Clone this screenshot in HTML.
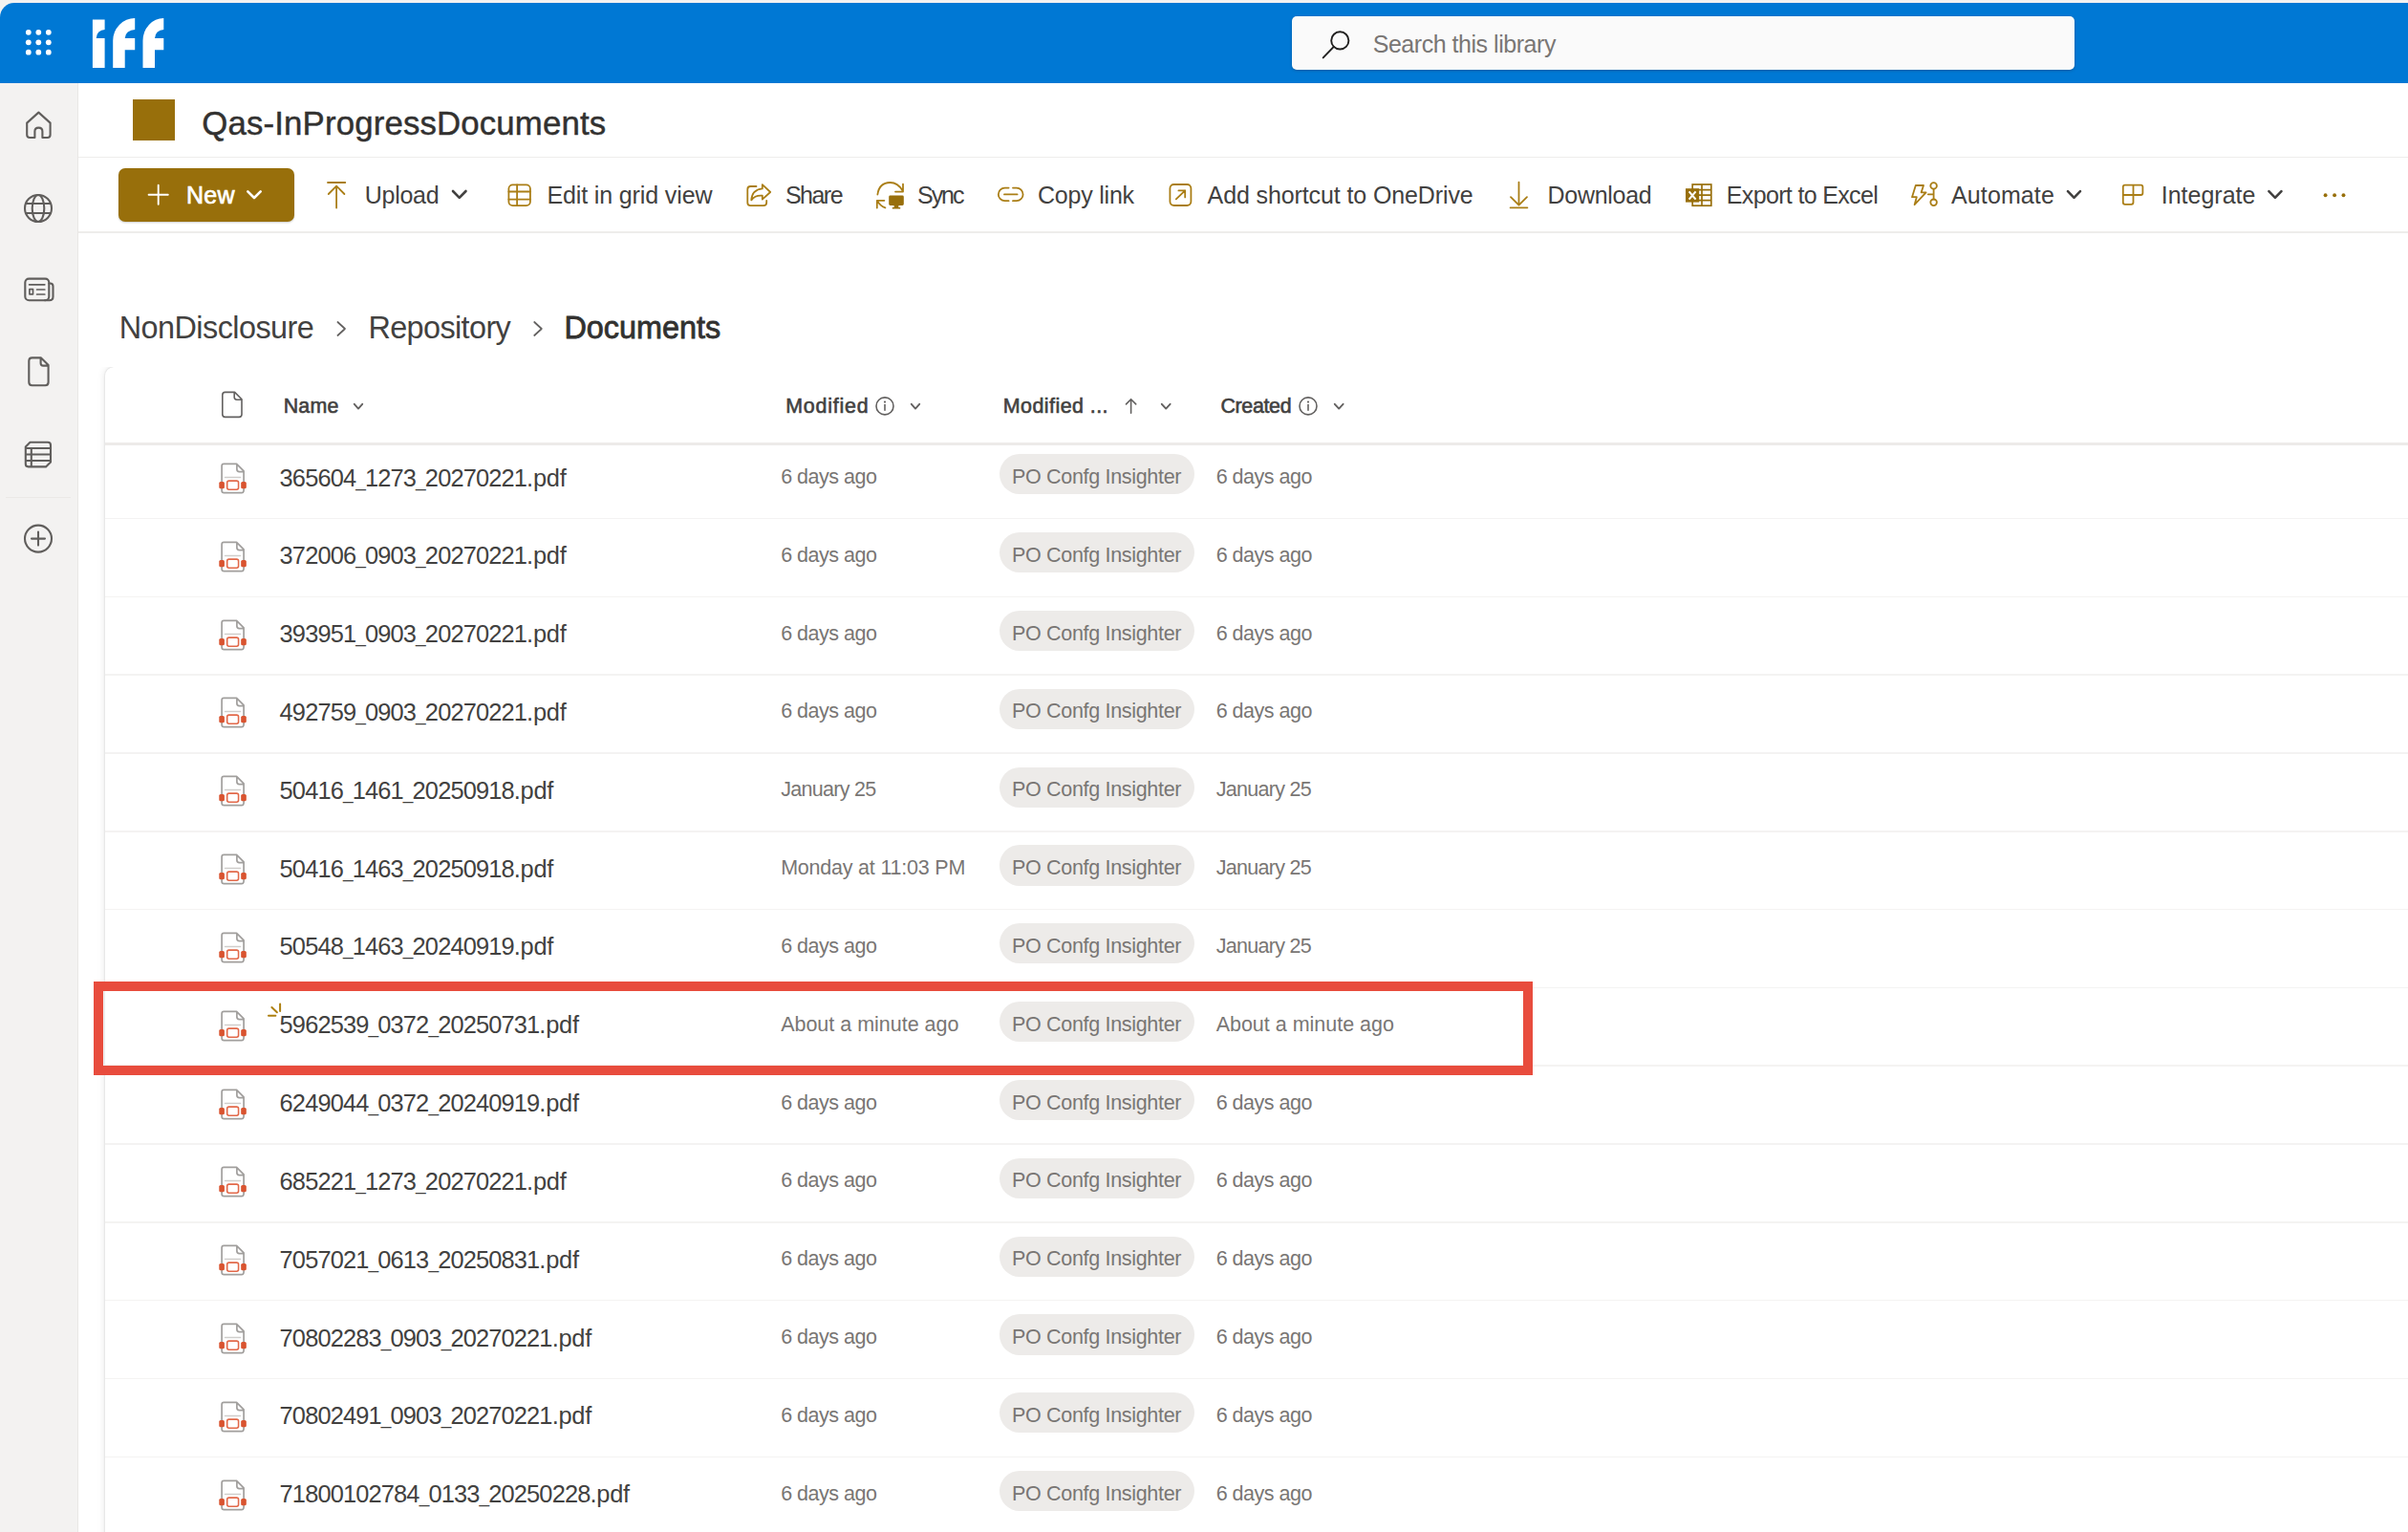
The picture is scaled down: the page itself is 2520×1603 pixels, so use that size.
<!DOCTYPE html>
<html lang="en"><head><meta charset="utf-8"><title>Qas-InProgressDocuments - Documents</title>
<style>
html,body{margin:0;padding:0}
body{width:2520px;height:1603px;overflow:hidden;position:relative;background:#fff;font-family:'Liberation Sans', sans-serif}
.t{position:absolute;white-space:pre;line-height:1;font-family:'Liberation Sans', sans-serif}
.abs{position:absolute}
.u{font-size:.75em}
svg{position:absolute;overflow:visible}

#strip{left:0;top:0;width:2520px;height:30px;background:#f3f2f1}
#suite{left:0;top:3px;width:2520px;height:84px;background:#0078d4;border-top-left-radius:15px}
#search{left:1352px;top:17px;width:819px;height:56px;background:#fafafa;border-radius:5px;box-shadow:0 1px 3px rgba(0,0,0,.25)}
#side{left:0;top:87px;width:81px;height:1516px;background:#f3f2f1;border-right:1px solid #e9e7e5}
#sidesep{left:6px;top:520px;width:68px;height:1px;background:#ebe9e7}
#sitelogo{left:139px;top:104px;width:44px;height:43px;background:#986f0b}
.hl{left:82px;width:2438px;height:1.6px;background:#eeedeb}
#newbtn{left:124px;top:176px;width:184px;height:56px;background:#986f0b;border-radius:7px;box-shadow:0 1px 2px rgba(0,0,0,.2)}
#cardwrap{left:90px;top:384px;width:2430px;height:1219px;overflow:hidden}
#card{left:20px;top:0;width:2430px;height:1300px;background:#fff;border-top-left-radius:9px;box-shadow:0 0 2px rgba(0,0,0,.17),0 0 9px rgba(0,0,0,.11)}
#hline{left:110px;top:462.5px;width:2410px;height:3px;background:#edebe9}
.rl{left:110px;width:2410px;height:1.6px;background:#f4f3f2}
.pill{left:1045.5px;width:204.3px;height:42.2px;border-radius:21.1px;background:#edebe9}
#redbox{left:98px;top:1027.4px;width:1486px;height:77.2px;border:10px solid #e84c3d}

</style></head><body>
<div class="abs" id="strip"></div>
<div class="abs" id="suite"></div>
<div class="abs" id="search"></div>
<div class="abs" id="side"></div>
<div class="abs" id="sidesep"></div>
<div class="abs" id="sitelogo"></div>
<div class="abs hl" style="top:163.9px"></div>
<div class="abs hl" style="top:242.1px"></div>
<div class="abs" id="newbtn"></div>
<div class="abs" id="cardwrap"><div class="abs" id="card"></div></div>
<div class="abs" id="hline"></div>
<div class="abs rl" style="top:541.70px"></div>
<div class="abs rl" style="top:623.52px"></div>
<div class="abs rl" style="top:705.34px"></div>
<div class="abs rl" style="top:787.16px"></div>
<div class="abs rl" style="top:868.98px"></div>
<div class="abs rl" style="top:950.80px"></div>
<div class="abs rl" style="top:1032.62px"></div>
<div class="abs rl" style="top:1114.44px"></div>
<div class="abs rl" style="top:1196.26px"></div>
<div class="abs rl" style="top:1278.08px"></div>
<div class="abs rl" style="top:1359.90px"></div>
<div class="abs rl" style="top:1441.72px"></div>
<div class="abs rl" style="top:1523.54px"></div>
<div class="abs pill" style="top:475.30px"></div>
<div class="abs pill" style="top:557.12px"></div>
<div class="abs pill" style="top:638.94px"></div>
<div class="abs pill" style="top:720.76px"></div>
<div class="abs pill" style="top:802.58px"></div>
<div class="abs pill" style="top:884.40px"></div>
<div class="abs pill" style="top:966.22px"></div>
<div class="abs pill" style="top:1048.04px"></div>
<div class="abs pill" style="top:1129.86px"></div>
<div class="abs pill" style="top:1211.68px"></div>
<div class="abs pill" style="top:1293.50px"></div>
<div class="abs pill" style="top:1375.32px"></div>
<div class="abs pill" style="top:1457.14px"></div>
<div class="abs pill" style="top:1538.96px"></div>
<svg class="ic" style="left:24px;top:28px" width="34" height="34" viewBox="24 28 34 34" ><g fill="#fff"><circle cx="29.8" cy="33.8" r="2.9"/><circle cx="40.3" cy="33.8" r="2.9"/><circle cx="50.8" cy="33.8" r="2.9"/><circle cx="29.8" cy="44.3" r="2.9"/><circle cx="40.3" cy="44.3" r="2.9"/><circle cx="50.8" cy="44.3" r="2.9"/><circle cx="29.8" cy="54.7" r="2.9"/><circle cx="40.3" cy="54.7" r="2.9"/><circle cx="50.8" cy="54.7" r="2.9"/></g></svg>
<svg class="ic" style="left:94px;top:16px" width="82" height="58" viewBox="94 16 82 58" role="img" aria-label="iff"><title>iff</title><g fill="#fff"><path d="M96.9,20.5 L109.6,20.5 L109.6,30.9 A8.9,9.2 0 0 0 100.7,40.1 L109.6,40.1 L109.6,71 L96.9,71 Z"/><path d="M118.2,71 L118.2,42.5 A22.999999999999986,23.5 0 0 1 141.2,19 L141.2,30.9 A10.5,9.2 0 0 0 130.7,40.1 L141.2,40.1 L141.2,52.2 L130.7,52.2 L130.7,71 Z"/><path d="M149.5,71 L149.5,42.5 A21.799999999999997,23.5 0 0 1 171.3,19 L171.3,30.9 A9.300000000000011,9.2 0 0 0 162.0,40.1 L171.3,40.1 L171.3,52.2 L162.0,52.2 L162.0,71 Z"/></g></svg>
<svg class="ic" style="left:1380px;top:28px" width="36" height="38" viewBox="1380 28 36 38" ><g fill="none" stroke="#201f1e" stroke-width="1.9" stroke-linecap="round"><circle cx="1402.3" cy="42.4" r="9.1"/><path d="M1395.8,48.9 L1384.7,60.4"/></g></svg>
<svg class="ic" style="left:24px;top:112px" width="34" height="36" viewBox="24 112 34 36" ><path fill="none" stroke="#605e5c" stroke-width="2.1" stroke-linecap="round" stroke-linejoin="round" d="M40.4,117.6 L28.2,128.6 L28.2,141 Q28.2,144 31.2,144 L36.4,144 L36.4,137.5 Q36.4,133.6 40.4,133.6 Q44.4,133.6 44.4,137.5 L44.4,144 L49.6,144 Q52.6,144 52.6,141 L52.6,128.6 Z"/></svg>
<svg class="ic" style="left:22px;top:200px" width="36" height="36" viewBox="22 200 36 36" ><g fill="none" stroke="#605e5c" stroke-width="2.1" stroke-linecap="round" stroke-linejoin="round"><circle cx="40" cy="218" r="14"/><ellipse cx="40" cy="218" rx="6.3" ry="14"/><path d="M26.9,213 L53.1,213 M26.9,223 L53.1,223"/></g></svg>
<svg class="ic" style="left:22px;top:286px" width="38" height="32" viewBox="22 286 38 32" ><g fill="none" stroke="#605e5c" stroke-width="2.1" stroke-linecap="round" stroke-linejoin="round"><rect x="26.3" y="291.6" width="25" height="22.6" rx="4"/><path d="M51.3,296.5 L52.5,296.5 Q55.5,296.5 55.5,299.5 L55.5,310.5 Q55.5,314.2 51.8,314.2 L47,314.2"/><path d="M30.6,297.8 L46.8,297.8 M38.6,303 L46.8,303 M38.6,308 L46.8,308" stroke-width="1.7"/><rect x="30.9" y="302.6" width="3.6" height="5.2" stroke-width="1.7"/></g></svg>
<svg class="ic" style="left:26px;top:370px" width="30" height="38" viewBox="26 370 30 38" ><path fill="none" stroke="#605e5c" stroke-width="2.1" stroke-linecap="round" stroke-linejoin="round" d="M33.5,374.4 L43,374.4 L50.6,382 L50.6,400 Q50.6,403.2 47.4,403.2 L33.5,403.2 Q30.3,403.2 30.3,400 L30.3,377.6 Q30.3,374.4 33.5,374.4 Z M42.6,374.8 L42.6,380 Q42.6,382.6 45.2,382.6 L50.2,382.6"/></svg>
<svg class="ic" style="left:22px;top:458px" width="36" height="36" viewBox="22 458 36 36" ><path fill="none" stroke="#605e5c" stroke-width="2.1" stroke-linecap="round" stroke-linejoin="round" stroke-width="1.8" d="M31.5,462.8 L50,462.8 Q53,462.8 53,465.8 L53,483.5 L48,488.4 L29.6,488.4 Q26.8,488.4 26.8,485.6 L26.8,467.4 ZM26.8,469 L53,469 M26.8,475.5 L53,475.5 M26.8,482 L53,482 M32.8,469 L32.8,488.4"/></svg>
<svg class="ic" style="left:22px;top:546px" width="36" height="36" viewBox="22 546 36 36" ><g fill="none" stroke="#605e5c" stroke-width="2.1" stroke-linecap="round" stroke-linejoin="round"><circle cx="40" cy="563.6" r="14"/><path d="M33,563.6 L47,563.6 M40,556.6 L40,570.6"/></g></svg>
<svg class="ic" style="left:150px;top:188px" width="32" height="32" viewBox="150 188 32 32" ><path fill="none" stroke="#fff" stroke-width="1.9" stroke-linecap="round" d="M155.6,203.7 L175.8,203.7 M165.7,193.7 L165.7,213.7"/></svg>
<svg class="ic" style="left:254px;top:194px" width="24" height="18" viewBox="254 194 24 18" ><path fill="none" stroke="#fff" stroke-width="2.6" stroke-linecap="round" stroke-linejoin="round" d="M259.3,200.3 L266.0,207.0 L272.7,200.3"/></svg>
<svg class="ic" style="left:468px;top:194px" width="24" height="18" viewBox="468 194 24 18" ><path fill="none" stroke="#424140" stroke-width="2.6" stroke-linecap="round" stroke-linejoin="round" d="M474,200.0 L480.75,206.8 L487.5,200.0"/></svg>
<svg class="ic" style="left:2158px;top:194px" width="24" height="18" viewBox="2158 194 24 18" ><path fill="none" stroke="#424140" stroke-width="2.6" stroke-linecap="round" stroke-linejoin="round" d="M2164,200.2 L2170.5,206.8 L2177,200.2"/></svg>
<svg class="ic" style="left:2369px;top:194px" width="24" height="18" viewBox="2369 194 24 18" ><path fill="none" stroke="#424140" stroke-width="2.6" stroke-linecap="round" stroke-linejoin="round" d="M2374.4,200.2 L2380.95,206.8 L2387.5,200.2"/></svg>
<svg class="ic" style="left:338px;top:186px" width="28" height="36" viewBox="338 186 28 36" ><path fill="none" stroke="#aa7e16" stroke-width="1.8" stroke-linecap="round" stroke-linejoin="round" d="M343,191 L361.3,191 M352.1,194.6 L352.1,217.6 M343.8,203 L352.1,194.6 L360.4,203"/></svg>
<svg class="ic" style="left:528px;top:188px" width="32" height="32" viewBox="528 188 32 32" ><g fill="none" stroke="#aa7e16" stroke-width="1.8" stroke-linecap="round" stroke-linejoin="round"><rect x="532.4" y="193.4" width="22.5" height="21.8" rx="4.2"/><path d="M541.1,193.4 L541.1,215.2 M532.4,200.5 L554.9,200.5 M532.4,208.6 L554.9,208.6"/></g></svg>
<svg class="ic" style="left:778px;top:188px" width="32" height="32" viewBox="778 188 32 32" ><path fill="none" stroke="#aa7e16" stroke-width="1.8" stroke-linecap="round" stroke-linejoin="round" d="M791.5,195 L785.5,195 Q782.3,195 782.3,198.2 L782.3,212 Q782.3,215.2 785.5,215.2 L799,215.2 Q802.2,215.2 802.2,212 L802.2,210 M797.8,193.2 L806.2,201 L797.8,208.6 L797.8,204.6 Q790,204 786.3,209.4 Q787,198.6 797.8,197.4 Z"/></svg>
<svg class="ic" style="left:912px;top:186px" width="38" height="36" viewBox="912 186 38 36" ><g fill="none" stroke="#aa7e16" stroke-width="1.8" stroke-linecap="round" stroke-linejoin="round"><path d="M918.4,203.5 Q920,191.2 931.5,191 Q939.5,191 944.6,199.5 M945,192.6 L945,200.6 L937,200.6"/><path d="M917.8,217.6 L917.8,209.8 L925.4,209.8 M918.2,210.2 Q921,215.6 926.4,217.4"/><path fill="#986f0b" stroke="none" d="M931.6,204.6 L944.4,204.6 Q945.8,204.6 945.8,206 L945.8,213.6 Q945.8,215 944.4,215 L940.4,215 L940.4,217 L942.2,217 L942.2,218.6 L933.8,218.6 L933.8,217 L935.6,217 L935.6,215 L931.6,215 Q930.2,215 930.2,213.6 L930.2,206 Q930.2,204.6 931.6,204.6 Z"/></g></svg>
<svg class="ic" style="left:1040px;top:190px" width="36" height="28" viewBox="1040 190 36 28" ><path fill="none" stroke="#aa7e16" stroke-width="1.8" stroke-linecap="round" stroke-linejoin="round" d="M1055.6,196.6 L1051.6,196.6 A6.8,6.8 0 0 0 1051.6,210.2 L1055.6,210.2 M1060,196.6 L1063.8,196.6 A6.8,6.8 0 0 1 1063.8,210.2 L1060,210.2 M1051,203.4 L1064.6,203.4"/></svg>
<svg class="ic" style="left:1220px;top:188px" width="32" height="32" viewBox="1220 188 32 32" ><g fill="none" stroke="#aa7e16" stroke-width="1.8" stroke-linecap="round" stroke-linejoin="round"><rect x="1224.4" y="193" width="22" height="22" rx="4.2"/><path d="M1230.8,208.4 L1240.2,199.4 M1233.4,199.4 L1240.2,199.4 L1240.2,206.4"/></g></svg>
<svg class="ic" style="left:1576px;top:186px" width="28" height="36" viewBox="1576 186 28 36" ><path fill="none" stroke="#aa7e16" stroke-width="1.8" stroke-linecap="round" stroke-linejoin="round" d="M1589.5,190.6 L1589.5,214.2 M1581,206.2 L1589.5,214.6 L1598,206.2 M1580.6,217.3 L1598.4,217.3"/></svg>
<svg class="ic" style="left:1760px;top:188px" width="36" height="32" viewBox="1760 188 36 32" ><g fill="none" stroke="#986f0b" stroke-width="1.7"><rect x="1771.2" y="193" width="19.6" height="22.2"/><path d="M1781,193 L1781,215.2 M1771.2,198.6 L1790.8,198.6 M1771.2,204.1 L1790.8,204.1 M1771.2,209.6 L1790.8,209.6"/></g><rect x="1764" y="197.2" width="14.2" height="14.4" fill="#986f0b"/><path d="M1767.6,200.4 L1774.6,208.6 M1774.6,200.4 L1767.6,208.6" stroke="#fff" stroke-width="2.1" fill="none"/></svg>
<svg class="ic" style="left:1996px;top:186px" width="36" height="34" viewBox="1996 186 36 34" ><g fill="none" stroke="#aa7e16" stroke-width="1.8" stroke-linecap="round" stroke-linejoin="round"><path d="M2004.8,194 L2013,194 L2010.6,201.4 L2015.6,201.4 L2003.6,214.2 L2005.8,206.2 L2001,206.2 Z"/><circle cx="2023.6" cy="194.4" r="3.3"/><circle cx="2023.6" cy="211.8" r="3.3"/><path d="M2023.6,197.8 L2023.6,208.4 M2017.8,203.3 L2023.6,203.3"/></g></svg>
<svg class="ic" style="left:2216px;top:188px" width="32" height="32" viewBox="2216 188 32 32" ><path fill="none" stroke="#aa7e16" stroke-width="1.8" stroke-linecap="round" stroke-linejoin="round" d="M2223.8,193.6 L2240.4,193.6 Q2242.4,193.6 2242.4,195.6 L2242.4,202 Q2242.4,204 2240.4,204 L2232.5,204 L2232.5,211.8 Q2232.5,213.8 2230.5,213.8 L2223.8,213.8 Q2221.8,213.8 2221.8,211.8 L2221.8,195.6 Q2221.8,193.6 2223.8,193.6 Z M2232.5,193.6 L2232.5,204 M2221.8,204 L2232.5,204"/></svg>
<svg class="ic" style="left:2428px;top:198px" width="32" height="12" viewBox="2428 198 32 12" ><g fill="#986f0b"><circle cx="2433.6" cy="204.3" r="1.95"/><circle cx="2443.1" cy="204.3" r="1.95"/><circle cx="2452.5" cy="204.3" r="1.95"/></g></svg>
<svg class="ic" style="left:348px;top:332px" width="18" height="24" viewBox="348 332 18 24" ><path fill="none" stroke="#636160" stroke-width="1.7" stroke-linecap="round" stroke-linejoin="round" d="M353.4,337 L361,344 L353.4,351"/></svg>
<svg class="ic" style="left:554px;top:332px" width="18" height="24" viewBox="554 332 18 24" ><path fill="none" stroke="#636160" stroke-width="1.7" stroke-linecap="round" stroke-linejoin="round" d="M559.2,337 L566.8,344 L559.2,351"/></svg>
<svg class="ic" style="left:228px;top:406px" width="30" height="34" viewBox="228 406 30 34" ><path fill="none" stroke="#636160" stroke-width="1.6" stroke-linecap="round" stroke-linejoin="round" d="M235.6,410.4 L245.6,410.4 L253,417.8 L253,433.6 Q253,436.4 250.2,436.4 L235.6,436.4 Q232.8,436.4 232.8,433.6 L232.8,413.2 Q232.8,410.4 235.6,410.4 Z M245.2,410.8 L245.2,415.6 Q245.2,418.2 247.8,418.2 L252.6,418.2"/></svg>
<svg class="ic" style="left:366px;top:418px" width="18" height="14" viewBox="366 418 18 14" ><path fill="none" stroke="#636160" stroke-width="1.9" stroke-linecap="round" stroke-linejoin="round" d="M370.8,422.8 L375.0,427.6 L379.2,422.8"/></svg>
<svg class="ic" style="left:949.4px;top:418px" width="18.0" height="14" viewBox="949.4 418 18.0 14" ><path fill="none" stroke="#636160" stroke-width="1.9" stroke-linecap="round" stroke-linejoin="round" d="M954.1999999999999,422.8 L958.4,427.6 L962.6,422.8"/></svg>
<svg class="ic" style="left:1210.6px;top:418px" width="18.40000000000009" height="14" viewBox="1210.6 418 18.40000000000009 14" ><path fill="none" stroke="#636160" stroke-width="1.9" stroke-linecap="round" stroke-linejoin="round" d="M1215.3999999999999,422.8 L1219.8,427.6 L1224.2,422.8"/></svg>
<svg class="ic" style="left:1391.6px;top:418px" width="18.40000000000009" height="14" viewBox="1391.6 418 18.40000000000009 14" ><path fill="none" stroke="#636160" stroke-width="1.9" stroke-linecap="round" stroke-linejoin="round" d="M1396.3999999999999,422.8 L1400.8,427.6 L1405.2,422.8"/></svg>
<svg class="ic" style="left:914.1px;top:412px" width="24" height="26" viewBox="914.1 412 24 26" ><g fill="none" stroke="#636160" stroke-width="1.6" stroke-linecap="round" stroke-linejoin="round" stroke-width="1.4"><circle cx="926.1" cy="424.9" r="9.0"/><path d="M926.1,423.6 L926.1,429.2"/></g><circle cx="926.1" cy="420.6" r="1.1" fill="#636160"/></svg>
<svg class="ic" style="left:1356.9px;top:412px" width="24" height="26" viewBox="1356.9 412 24 26" ><g fill="none" stroke="#636160" stroke-width="1.6" stroke-linecap="round" stroke-linejoin="round" stroke-width="1.4"><circle cx="1368.9" cy="424.9" r="9.0"/><path d="M1368.9,423.6 L1368.9,429.2"/></g><circle cx="1368.9" cy="420.6" r="1.1" fill="#636160"/></svg>
<svg class="ic" style="left:1174px;top:412px" width="20" height="24" viewBox="1174 412 20 24" ><path fill="none" stroke="#636160" stroke-width="1.6" stroke-linecap="round" stroke-linejoin="round" d="M1183.6,417.8 L1183.6,432.2 M1178.5,422.9 L1183.6,417.7 L1188.7,422.9"/></svg>
<svg class="ic" style="left:226px;top:482.0px" width="36" height="36" viewBox="226 482.0 36 36" ><path fill="#fff" stroke="#a19f9d" stroke-width="1.7" stroke-linejoin="round" d="M234.2,485.4 L247.6,485.4 L255.1,492.9 L255.1,513.2 Q255.1,515.6 252.7,515.6 L234.5,515.6 Q232.1,515.6 232.1,513.2 L232.1,487.5 Q232.1,485.4 234.2,485.4 Z M247.9,485.8 L247.9,491.0 Q247.9,493.6 250.5,493.6 L254.8,493.6"/><path d="M235.6,499.5 L251.6,499.5" stroke="#d0cecc" stroke-width="1.6" stroke-linecap="round"/><rect x="237.7" y="503.1" width="11.9" height="9.1" rx="1.9" fill="#fff" stroke="#e2694a" stroke-width="1.6"/><rect x="229.3" y="503.9" width="5.6" height="7.4" rx="1.6" fill="#d9532f"/><rect x="252.2" y="503.9" width="5.6" height="7.4" rx="1.6" fill="#d9532f"/></svg>
<svg class="ic" style="left:226px;top:563.82px" width="36" height="36" viewBox="226 563.82 36 36" ><path fill="#fff" stroke="#a19f9d" stroke-width="1.7" stroke-linejoin="round" d="M234.2,567.22 L247.6,567.22 L255.1,574.72 L255.1,595.02 Q255.1,597.42 252.7,597.42 L234.5,597.42 Q232.1,597.42 232.1,595.02 L232.1,569.32 Q232.1,567.22 234.2,567.22 Z M247.9,567.62 L247.9,572.82 Q247.9,575.42 250.5,575.42 L254.8,575.42"/><path d="M235.6,581.32 L251.6,581.32" stroke="#d0cecc" stroke-width="1.6" stroke-linecap="round"/><rect x="237.7" y="584.92" width="11.9" height="9.1" rx="1.9" fill="#fff" stroke="#e2694a" stroke-width="1.6"/><rect x="229.3" y="585.72" width="5.6" height="7.4" rx="1.6" fill="#d9532f"/><rect x="252.2" y="585.72" width="5.6" height="7.4" rx="1.6" fill="#d9532f"/></svg>
<svg class="ic" style="left:226px;top:645.64px" width="36" height="36" viewBox="226 645.64 36 36" ><path fill="#fff" stroke="#a19f9d" stroke-width="1.7" stroke-linejoin="round" d="M234.2,649.04 L247.6,649.04 L255.1,656.54 L255.1,676.84 Q255.1,679.24 252.7,679.24 L234.5,679.24 Q232.1,679.24 232.1,676.84 L232.1,651.14 Q232.1,649.04 234.2,649.04 Z M247.9,649.44 L247.9,654.64 Q247.9,657.24 250.5,657.24 L254.8,657.24"/><path d="M235.6,663.14 L251.6,663.14" stroke="#d0cecc" stroke-width="1.6" stroke-linecap="round"/><rect x="237.7" y="666.74" width="11.9" height="9.1" rx="1.9" fill="#fff" stroke="#e2694a" stroke-width="1.6"/><rect x="229.3" y="667.54" width="5.6" height="7.4" rx="1.6" fill="#d9532f"/><rect x="252.2" y="667.54" width="5.6" height="7.4" rx="1.6" fill="#d9532f"/></svg>
<svg class="ic" style="left:226px;top:727.46px" width="36" height="36" viewBox="226 727.46 36 36" ><path fill="#fff" stroke="#a19f9d" stroke-width="1.7" stroke-linejoin="round" d="M234.2,730.86 L247.6,730.86 L255.1,738.36 L255.1,758.66 Q255.1,761.06 252.7,761.06 L234.5,761.06 Q232.1,761.06 232.1,758.66 L232.1,732.96 Q232.1,730.86 234.2,730.86 Z M247.9,731.26 L247.9,736.46 Q247.9,739.06 250.5,739.06 L254.8,739.06"/><path d="M235.6,744.96 L251.6,744.96" stroke="#d0cecc" stroke-width="1.6" stroke-linecap="round"/><rect x="237.7" y="748.56" width="11.9" height="9.1" rx="1.9" fill="#fff" stroke="#e2694a" stroke-width="1.6"/><rect x="229.3" y="749.36" width="5.6" height="7.4" rx="1.6" fill="#d9532f"/><rect x="252.2" y="749.36" width="5.6" height="7.4" rx="1.6" fill="#d9532f"/></svg>
<svg class="ic" style="left:226px;top:809.28px" width="36" height="36" viewBox="226 809.28 36 36" ><path fill="#fff" stroke="#a19f9d" stroke-width="1.7" stroke-linejoin="round" d="M234.2,812.68 L247.6,812.68 L255.1,820.18 L255.1,840.48 Q255.1,842.88 252.7,842.88 L234.5,842.88 Q232.1,842.88 232.1,840.48 L232.1,814.78 Q232.1,812.68 234.2,812.68 Z M247.9,813.08 L247.9,818.28 Q247.9,820.88 250.5,820.88 L254.8,820.88"/><path d="M235.6,826.78 L251.6,826.78" stroke="#d0cecc" stroke-width="1.6" stroke-linecap="round"/><rect x="237.7" y="830.38" width="11.9" height="9.1" rx="1.9" fill="#fff" stroke="#e2694a" stroke-width="1.6"/><rect x="229.3" y="831.18" width="5.6" height="7.4" rx="1.6" fill="#d9532f"/><rect x="252.2" y="831.18" width="5.6" height="7.4" rx="1.6" fill="#d9532f"/></svg>
<svg class="ic" style="left:226px;top:891.1px" width="36" height="36" viewBox="226 891.1 36 36" ><path fill="#fff" stroke="#a19f9d" stroke-width="1.7" stroke-linejoin="round" d="M234.2,894.5 L247.6,894.5 L255.1,902.0 L255.1,922.3 Q255.1,924.7 252.7,924.7 L234.5,924.7 Q232.1,924.7 232.1,922.3 L232.1,896.6 Q232.1,894.5 234.2,894.5 Z M247.9,894.9 L247.9,900.1 Q247.9,902.7 250.5,902.7 L254.8,902.7"/><path d="M235.6,908.6 L251.6,908.6" stroke="#d0cecc" stroke-width="1.6" stroke-linecap="round"/><rect x="237.7" y="912.2" width="11.9" height="9.1" rx="1.9" fill="#fff" stroke="#e2694a" stroke-width="1.6"/><rect x="229.3" y="913.0" width="5.6" height="7.4" rx="1.6" fill="#d9532f"/><rect x="252.2" y="913.0" width="5.6" height="7.4" rx="1.6" fill="#d9532f"/></svg>
<svg class="ic" style="left:226px;top:972.92px" width="36" height="36" viewBox="226 972.92 36 36" ><path fill="#fff" stroke="#a19f9d" stroke-width="1.7" stroke-linejoin="round" d="M234.2,976.32 L247.6,976.32 L255.1,983.82 L255.1,1004.12 Q255.1,1006.52 252.7,1006.52 L234.5,1006.52 Q232.1,1006.52 232.1,1004.12 L232.1,978.42 Q232.1,976.32 234.2,976.32 Z M247.9,976.72 L247.9,981.92 Q247.9,984.52 250.5,984.52 L254.8,984.52"/><path d="M235.6,990.42 L251.6,990.42" stroke="#d0cecc" stroke-width="1.6" stroke-linecap="round"/><rect x="237.7" y="994.02" width="11.9" height="9.1" rx="1.9" fill="#fff" stroke="#e2694a" stroke-width="1.6"/><rect x="229.3" y="994.82" width="5.6" height="7.4" rx="1.6" fill="#d9532f"/><rect x="252.2" y="994.82" width="5.6" height="7.4" rx="1.6" fill="#d9532f"/></svg>
<svg class="ic" style="left:226px;top:1054.74px" width="36" height="36" viewBox="226 1054.74 36 36" ><path fill="#fff" stroke="#a19f9d" stroke-width="1.7" stroke-linejoin="round" d="M234.2,1058.14 L247.6,1058.14 L255.1,1065.64 L255.1,1085.94 Q255.1,1088.34 252.7,1088.34 L234.5,1088.34 Q232.1,1088.34 232.1,1085.94 L232.1,1060.24 Q232.1,1058.14 234.2,1058.14 Z M247.9,1058.54 L247.9,1063.74 Q247.9,1066.34 250.5,1066.34 L254.8,1066.34"/><path d="M235.6,1072.24 L251.6,1072.24" stroke="#d0cecc" stroke-width="1.6" stroke-linecap="round"/><rect x="237.7" y="1075.84" width="11.9" height="9.1" rx="1.9" fill="#fff" stroke="#e2694a" stroke-width="1.6"/><rect x="229.3" y="1076.64" width="5.6" height="7.4" rx="1.6" fill="#d9532f"/><rect x="252.2" y="1076.64" width="5.6" height="7.4" rx="1.6" fill="#d9532f"/></svg>
<svg class="ic" style="left:226px;top:1136.56px" width="36" height="36" viewBox="226 1136.56 36 36" ><path fill="#fff" stroke="#a19f9d" stroke-width="1.7" stroke-linejoin="round" d="M234.2,1139.96 L247.6,1139.96 L255.1,1147.46 L255.1,1167.76 Q255.1,1170.16 252.7,1170.16 L234.5,1170.16 Q232.1,1170.16 232.1,1167.76 L232.1,1142.06 Q232.1,1139.96 234.2,1139.96 Z M247.9,1140.36 L247.9,1145.56 Q247.9,1148.16 250.5,1148.16 L254.8,1148.16"/><path d="M235.6,1154.06 L251.6,1154.06" stroke="#d0cecc" stroke-width="1.6" stroke-linecap="round"/><rect x="237.7" y="1157.66" width="11.9" height="9.1" rx="1.9" fill="#fff" stroke="#e2694a" stroke-width="1.6"/><rect x="229.3" y="1158.46" width="5.6" height="7.4" rx="1.6" fill="#d9532f"/><rect x="252.2" y="1158.46" width="5.6" height="7.4" rx="1.6" fill="#d9532f"/></svg>
<svg class="ic" style="left:226px;top:1218.38px" width="36" height="36" viewBox="226 1218.38 36 36" ><path fill="#fff" stroke="#a19f9d" stroke-width="1.7" stroke-linejoin="round" d="M234.2,1221.78 L247.6,1221.78 L255.1,1229.28 L255.1,1249.58 Q255.1,1251.98 252.7,1251.98 L234.5,1251.98 Q232.1,1251.98 232.1,1249.58 L232.1,1223.88 Q232.1,1221.78 234.2,1221.78 Z M247.9,1222.18 L247.9,1227.38 Q247.9,1229.98 250.5,1229.98 L254.8,1229.98"/><path d="M235.6,1235.88 L251.6,1235.88" stroke="#d0cecc" stroke-width="1.6" stroke-linecap="round"/><rect x="237.7" y="1239.48" width="11.9" height="9.1" rx="1.9" fill="#fff" stroke="#e2694a" stroke-width="1.6"/><rect x="229.3" y="1240.28" width="5.6" height="7.4" rx="1.6" fill="#d9532f"/><rect x="252.2" y="1240.28" width="5.6" height="7.4" rx="1.6" fill="#d9532f"/></svg>
<svg class="ic" style="left:226px;top:1300.2px" width="36" height="36" viewBox="226 1300.2 36 36" ><path fill="#fff" stroke="#a19f9d" stroke-width="1.7" stroke-linejoin="round" d="M234.2,1303.6 L247.6,1303.6 L255.1,1311.1 L255.1,1331.4 Q255.1,1333.8 252.7,1333.8 L234.5,1333.8 Q232.1,1333.8 232.1,1331.4 L232.1,1305.7 Q232.1,1303.6 234.2,1303.6 Z M247.9,1304.0 L247.9,1309.2 Q247.9,1311.8 250.5,1311.8 L254.8,1311.8"/><path d="M235.6,1317.7 L251.6,1317.7" stroke="#d0cecc" stroke-width="1.6" stroke-linecap="round"/><rect x="237.7" y="1321.3" width="11.9" height="9.1" rx="1.9" fill="#fff" stroke="#e2694a" stroke-width="1.6"/><rect x="229.3" y="1322.1" width="5.6" height="7.4" rx="1.6" fill="#d9532f"/><rect x="252.2" y="1322.1" width="5.6" height="7.4" rx="1.6" fill="#d9532f"/></svg>
<svg class="ic" style="left:226px;top:1382.02px" width="36" height="36" viewBox="226 1382.02 36 36" ><path fill="#fff" stroke="#a19f9d" stroke-width="1.7" stroke-linejoin="round" d="M234.2,1385.42 L247.6,1385.42 L255.1,1392.92 L255.1,1413.22 Q255.1,1415.62 252.7,1415.62 L234.5,1415.62 Q232.1,1415.62 232.1,1413.22 L232.1,1387.52 Q232.1,1385.42 234.2,1385.42 Z M247.9,1385.82 L247.9,1391.02 Q247.9,1393.62 250.5,1393.62 L254.8,1393.62"/><path d="M235.6,1399.52 L251.6,1399.52" stroke="#d0cecc" stroke-width="1.6" stroke-linecap="round"/><rect x="237.7" y="1403.12" width="11.9" height="9.1" rx="1.9" fill="#fff" stroke="#e2694a" stroke-width="1.6"/><rect x="229.3" y="1403.92" width="5.6" height="7.4" rx="1.6" fill="#d9532f"/><rect x="252.2" y="1403.92" width="5.6" height="7.4" rx="1.6" fill="#d9532f"/></svg>
<svg class="ic" style="left:226px;top:1463.84px" width="36" height="36" viewBox="226 1463.84 36 36" ><path fill="#fff" stroke="#a19f9d" stroke-width="1.7" stroke-linejoin="round" d="M234.2,1467.24 L247.6,1467.24 L255.1,1474.74 L255.1,1495.04 Q255.1,1497.44 252.7,1497.44 L234.5,1497.44 Q232.1,1497.44 232.1,1495.04 L232.1,1469.34 Q232.1,1467.24 234.2,1467.24 Z M247.9,1467.64 L247.9,1472.84 Q247.9,1475.44 250.5,1475.44 L254.8,1475.44"/><path d="M235.6,1481.34 L251.6,1481.34" stroke="#d0cecc" stroke-width="1.6" stroke-linecap="round"/><rect x="237.7" y="1484.94" width="11.9" height="9.1" rx="1.9" fill="#fff" stroke="#e2694a" stroke-width="1.6"/><rect x="229.3" y="1485.74" width="5.6" height="7.4" rx="1.6" fill="#d9532f"/><rect x="252.2" y="1485.74" width="5.6" height="7.4" rx="1.6" fill="#d9532f"/></svg>
<svg class="ic" style="left:226px;top:1545.66px" width="36" height="36" viewBox="226 1545.66 36 36" ><path fill="#fff" stroke="#a19f9d" stroke-width="1.7" stroke-linejoin="round" d="M234.2,1549.06 L247.6,1549.06 L255.1,1556.56 L255.1,1576.86 Q255.1,1579.26 252.7,1579.26 L234.5,1579.26 Q232.1,1579.26 232.1,1576.86 L232.1,1551.16 Q232.1,1549.06 234.2,1549.06 Z M247.9,1549.46 L247.9,1554.66 Q247.9,1557.26 250.5,1557.26 L254.8,1557.26"/><path d="M235.6,1563.16 L251.6,1563.16" stroke="#d0cecc" stroke-width="1.6" stroke-linecap="round"/><rect x="237.7" y="1566.76" width="11.9" height="9.1" rx="1.9" fill="#fff" stroke="#e2694a" stroke-width="1.6"/><rect x="229.3" y="1567.56" width="5.6" height="7.4" rx="1.6" fill="#d9532f"/><rect x="252.2" y="1567.56" width="5.6" height="7.4" rx="1.6" fill="#d9532f"/></svg>
<svg class="ic" style="left:278px;top:1046px" width="18" height="20" viewBox="278 1046 18 20" ><path fill="none" stroke="#ad7f10" stroke-width="2" stroke-linecap="round" d="M293.1,1050.4 L293.1,1058 M284.4,1054 L289.9,1059.2 M281,1062.8 L288.4,1062.8"/></svg>
<span class="t" style="left:1436.70px;top:33.64px;font-size:25px;letter-spacing:-0.465px;color:#797674">Search this library</span>
<span class="t" style="left:211.31px;top:111.64px;font-size:34.8px;letter-spacing:0.147px;color:#323130;-webkit-text-stroke:0.45px #323130">Qas-InProgressDocuments</span>
<span class="t" style="left:195.00px;top:192.19px;font-size:25px;letter-spacing:0.292px;color:#ffffff;-webkit-text-stroke:0.7px #ffffff">New</span>
<span class="t" style="left:381.80px;top:192.19px;font-size:25px;letter-spacing:-0.287px;color:#424140">Upload</span>
<span class="t" style="left:572.40px;top:192.19px;font-size:25px;letter-spacing:-0.124px;color:#424140">Edit in grid view</span>
<span class="t" style="left:821.90px;top:192.19px;font-size:25px;letter-spacing:-1.505px;color:#424140">Share</span>
<span class="t" style="left:960.00px;top:192.19px;font-size:25px;letter-spacing:-2.031px;color:#424140">Sync</span>
<span class="t" style="left:1085.90px;top:192.19px;font-size:25px;letter-spacing:-0.204px;color:#424140">Copy link</span>
<span class="t" style="left:1263.60px;top:192.19px;font-size:25px;letter-spacing:-0.113px;color:#424140">Add shortcut to OneDrive</span>
<span class="t" style="left:1619.50px;top:192.19px;font-size:25px;letter-spacing:-0.284px;color:#424140">Download</span>
<span class="t" style="left:1806.80px;top:192.19px;font-size:25px;letter-spacing:-0.660px;color:#424140">Export to Excel</span>
<span class="t" style="left:2042.10px;top:192.19px;font-size:25px;letter-spacing:0.098px;color:#424140">Automate</span>
<span class="t" style="left:2261.80px;top:192.19px;font-size:25px;letter-spacing:-0.011px;color:#424140">Integrate</span>
<span class="t" style="left:124.70px;top:327.07px;font-size:32.4px;letter-spacing:-0.544px;color:#424140">NonDisclosure</span>
<span class="t" style="left:385.40px;top:327.07px;font-size:32.4px;letter-spacing:-0.604px;color:#424140">Repository</span>
<span class="t" style="left:590.40px;top:327.07px;font-size:32.4px;letter-spacing:-0.017px;color:#323130;-webkit-text-stroke:0.8px #323130">Documents</span>
<span class="t" style="left:296.74px;top:414.98px;font-size:21.4px;letter-spacing:0.183px;color:#424140;-webkit-text-stroke:0.6px #424140">Name</span>
<span class="t" style="left:822.24px;top:414.98px;font-size:21.4px;letter-spacing:0.793px;color:#424140;-webkit-text-stroke:0.6px #424140">Modified</span>
<span class="t" style="left:1049.84px;top:414.98px;font-size:21.4px;letter-spacing:0.462px;color:#424140;-webkit-text-stroke:0.6px #424140">Modified ...</span>
<span class="t" style="left:1277.44px;top:414.98px;font-size:21.4px;letter-spacing:-0.333px;color:#424140;-webkit-text-stroke:0.6px #424140">Created</span>
<span class="t" style="left:292.58px;top:487.50px;font-size:25.4px;letter-spacing:-0.844px;color:#424140">365604<span class="u">_</span>1273<span class="u">_</span>20270221<span style="letter-spacing:-0.244px">.pdf</span></span>
<span class="t" style="left:817.14px;top:489.00px;font-size:21.5px;letter-spacing:-0.476px;color:#797674">6 days ago</span>
<span class="t" style="left:1059.04px;top:489.00px;font-size:21.5px;letter-spacing:-0.320px;color:#797674">PO Confg Insighter</span>
<span class="t" style="left:1272.64px;top:489.00px;font-size:21.5px;letter-spacing:-0.476px;color:#797674">6 days ago</span>
<span class="t" style="left:292.58px;top:569.32px;font-size:25.4px;letter-spacing:-0.844px;color:#424140">372006<span class="u">_</span>0903<span class="u">_</span>20270221<span style="letter-spacing:-0.244px">.pdf</span></span>
<span class="t" style="left:817.14px;top:570.82px;font-size:21.5px;letter-spacing:-0.476px;color:#797674">6 days ago</span>
<span class="t" style="left:1059.04px;top:570.82px;font-size:21.5px;letter-spacing:-0.320px;color:#797674">PO Confg Insighter</span>
<span class="t" style="left:1272.64px;top:570.82px;font-size:21.5px;letter-spacing:-0.476px;color:#797674">6 days ago</span>
<span class="t" style="left:292.58px;top:651.14px;font-size:25.4px;letter-spacing:-0.844px;color:#424140">393951<span class="u">_</span>0903<span class="u">_</span>20270221<span style="letter-spacing:-0.244px">.pdf</span></span>
<span class="t" style="left:817.14px;top:652.64px;font-size:21.5px;letter-spacing:-0.476px;color:#797674">6 days ago</span>
<span class="t" style="left:1059.04px;top:652.64px;font-size:21.5px;letter-spacing:-0.320px;color:#797674">PO Confg Insighter</span>
<span class="t" style="left:1272.64px;top:652.64px;font-size:21.5px;letter-spacing:-0.476px;color:#797674">6 days ago</span>
<span class="t" style="left:292.58px;top:732.96px;font-size:25.4px;letter-spacing:-0.844px;color:#424140">492759<span class="u">_</span>0903<span class="u">_</span>20270221<span style="letter-spacing:-0.244px">.pdf</span></span>
<span class="t" style="left:817.14px;top:734.46px;font-size:21.5px;letter-spacing:-0.476px;color:#797674">6 days ago</span>
<span class="t" style="left:1059.04px;top:734.46px;font-size:21.5px;letter-spacing:-0.320px;color:#797674">PO Confg Insighter</span>
<span class="t" style="left:1272.64px;top:734.46px;font-size:21.5px;letter-spacing:-0.476px;color:#797674">6 days ago</span>
<span class="t" style="left:292.58px;top:814.78px;font-size:25.4px;letter-spacing:-0.844px;color:#424140">50416<span class="u">_</span>1461<span class="u">_</span>20250918<span style="letter-spacing:-0.244px">.pdf</span></span>
<span class="t" style="left:817.14px;top:816.28px;font-size:21.5px;letter-spacing:-0.697px;color:#797674">January 25</span>
<span class="t" style="left:1059.04px;top:816.28px;font-size:21.5px;letter-spacing:-0.320px;color:#797674">PO Confg Insighter</span>
<span class="t" style="left:1272.64px;top:816.28px;font-size:21.5px;letter-spacing:-0.697px;color:#797674">January 25</span>
<span class="t" style="left:292.58px;top:896.60px;font-size:25.4px;letter-spacing:-0.844px;color:#424140">50416<span class="u">_</span>1463<span class="u">_</span>20250918<span style="letter-spacing:-0.244px">.pdf</span></span>
<span class="t" style="left:817.14px;top:898.10px;font-size:21.5px;letter-spacing:-0.210px;color:#797674">Monday at 11:03 PM</span>
<span class="t" style="left:1059.04px;top:898.10px;font-size:21.5px;letter-spacing:-0.320px;color:#797674">PO Confg Insighter</span>
<span class="t" style="left:1272.64px;top:898.10px;font-size:21.5px;letter-spacing:-0.697px;color:#797674">January 25</span>
<span class="t" style="left:292.58px;top:978.42px;font-size:25.4px;letter-spacing:-0.844px;color:#424140">50548<span class="u">_</span>1463<span class="u">_</span>20240919<span style="letter-spacing:-0.244px">.pdf</span></span>
<span class="t" style="left:817.14px;top:979.92px;font-size:21.5px;letter-spacing:-0.476px;color:#797674">6 days ago</span>
<span class="t" style="left:1059.04px;top:979.92px;font-size:21.5px;letter-spacing:-0.320px;color:#797674">PO Confg Insighter</span>
<span class="t" style="left:1272.64px;top:979.92px;font-size:21.5px;letter-spacing:-0.697px;color:#797674">January 25</span>
<span class="t" style="left:292.58px;top:1060.24px;font-size:25.4px;letter-spacing:-0.844px;color:#424140">5962539<span class="u">_</span>0372<span class="u">_</span>20250731<span style="letter-spacing:-0.244px">.pdf</span></span>
<span class="t" style="left:817.14px;top:1061.74px;font-size:21.5px;letter-spacing:-0.009px;color:#797674">About a minute ago</span>
<span class="t" style="left:1059.04px;top:1061.74px;font-size:21.5px;letter-spacing:-0.320px;color:#797674">PO Confg Insighter</span>
<span class="t" style="left:1272.64px;top:1061.74px;font-size:21.5px;letter-spacing:-0.009px;color:#797674">About a minute ago</span>
<span class="t" style="left:292.58px;top:1142.06px;font-size:25.4px;letter-spacing:-0.844px;color:#424140">6249044<span class="u">_</span>0372<span class="u">_</span>20240919<span style="letter-spacing:-0.244px">.pdf</span></span>
<span class="t" style="left:817.14px;top:1143.56px;font-size:21.5px;letter-spacing:-0.476px;color:#797674">6 days ago</span>
<span class="t" style="left:1059.04px;top:1143.56px;font-size:21.5px;letter-spacing:-0.320px;color:#797674">PO Confg Insighter</span>
<span class="t" style="left:1272.64px;top:1143.56px;font-size:21.5px;letter-spacing:-0.476px;color:#797674">6 days ago</span>
<span class="t" style="left:292.58px;top:1223.88px;font-size:25.4px;letter-spacing:-0.844px;color:#424140">685221<span class="u">_</span>1273<span class="u">_</span>20270221<span style="letter-spacing:-0.244px">.pdf</span></span>
<span class="t" style="left:817.14px;top:1225.38px;font-size:21.5px;letter-spacing:-0.476px;color:#797674">6 days ago</span>
<span class="t" style="left:1059.04px;top:1225.38px;font-size:21.5px;letter-spacing:-0.320px;color:#797674">PO Confg Insighter</span>
<span class="t" style="left:1272.64px;top:1225.38px;font-size:21.5px;letter-spacing:-0.476px;color:#797674">6 days ago</span>
<span class="t" style="left:292.58px;top:1305.70px;font-size:25.4px;letter-spacing:-0.844px;color:#424140">7057021<span class="u">_</span>0613<span class="u">_</span>20250831<span style="letter-spacing:-0.244px">.pdf</span></span>
<span class="t" style="left:817.14px;top:1307.20px;font-size:21.5px;letter-spacing:-0.476px;color:#797674">6 days ago</span>
<span class="t" style="left:1059.04px;top:1307.20px;font-size:21.5px;letter-spacing:-0.320px;color:#797674">PO Confg Insighter</span>
<span class="t" style="left:1272.64px;top:1307.20px;font-size:21.5px;letter-spacing:-0.476px;color:#797674">6 days ago</span>
<span class="t" style="left:292.58px;top:1387.52px;font-size:25.4px;letter-spacing:-0.844px;color:#424140">70802283<span class="u">_</span>0903<span class="u">_</span>20270221<span style="letter-spacing:-0.244px">.pdf</span></span>
<span class="t" style="left:817.14px;top:1389.02px;font-size:21.5px;letter-spacing:-0.476px;color:#797674">6 days ago</span>
<span class="t" style="left:1059.04px;top:1389.02px;font-size:21.5px;letter-spacing:-0.320px;color:#797674">PO Confg Insighter</span>
<span class="t" style="left:1272.64px;top:1389.02px;font-size:21.5px;letter-spacing:-0.476px;color:#797674">6 days ago</span>
<span class="t" style="left:292.58px;top:1469.34px;font-size:25.4px;letter-spacing:-0.844px;color:#424140">70802491<span class="u">_</span>0903<span class="u">_</span>20270221<span style="letter-spacing:-0.244px">.pdf</span></span>
<span class="t" style="left:817.14px;top:1470.84px;font-size:21.5px;letter-spacing:-0.476px;color:#797674">6 days ago</span>
<span class="t" style="left:1059.04px;top:1470.84px;font-size:21.5px;letter-spacing:-0.320px;color:#797674">PO Confg Insighter</span>
<span class="t" style="left:1272.64px;top:1470.84px;font-size:21.5px;letter-spacing:-0.476px;color:#797674">6 days ago</span>
<span class="t" style="left:292.58px;top:1551.16px;font-size:25.4px;letter-spacing:-0.844px;color:#424140">71800102784<span class="u">_</span>0133<span class="u">_</span>20250228<span style="letter-spacing:-0.244px">.pdf</span></span>
<span class="t" style="left:817.14px;top:1552.66px;font-size:21.5px;letter-spacing:-0.476px;color:#797674">6 days ago</span>
<span class="t" style="left:1059.04px;top:1552.66px;font-size:21.5px;letter-spacing:-0.320px;color:#797674">PO Confg Insighter</span>
<span class="t" style="left:1272.64px;top:1552.66px;font-size:21.5px;letter-spacing:-0.476px;color:#797674">6 days ago</span>
<div class="abs" id="redbox"></div>
</body></html>
